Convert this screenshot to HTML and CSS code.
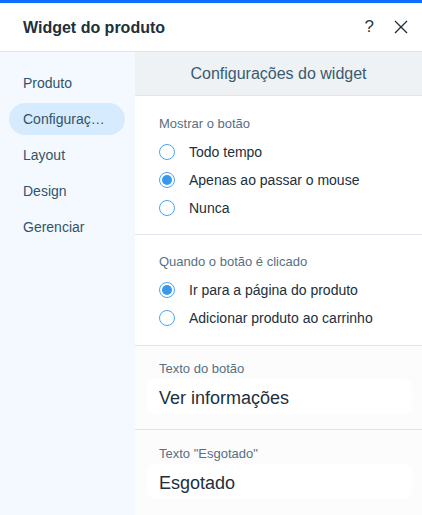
FILE: index.html
```html
<!DOCTYPE html>
<html lang="pt">
<head>
  <meta charset="UTF-8" />
  <meta name="viewport" content="width=device-width, initial-scale=1" />
  <title>Widget do produto</title>
  <link rel="stylesheet" href="styles.css">
</head>
<body>

  <div class="panel">
    <div class="topbar"></div>

    <div class="header">
      <h2>Widget do produto</h2>
      <div class="header-actions">
        <span class="help">?</span>
        <svg class="close" width="14" height="14" viewBox="0 0 14 14">
          <path d="M1 1 L13 13 M13 1 L1 13" stroke="#1d2b36" stroke-width="1.3" fill="none" />
        </svg>
      </div>
    </div>

    <div class="main">
      <nav class="sidebar">
        <div class="nav-item">Produto</div>
        <div class="nav-item active">Configuraç…</div>
        <div class="nav-item">Layout</div>
        <div class="nav-item">Design</div>
        <div class="nav-item">Gerenciar</div>
      </nav>

      <div class="content">
        <div class="content-title">Configurações do widget</div>

        <div class="section">
          <div class="section-label">Mostrar o botão</div>
          <label class="radio"><span class="dot"></span>Todo tempo</label>
          <label class="radio checked"><span class="dot"></span>Apenas ao passar o mouse</label>
          <label class="radio"><span class="dot"></span>Nunca</label>
        </div>

        <div class="section second">
          <div class="section-label">Quando o botão é clicado</div>
          <label class="radio checked"><span class="dot"></span>Ir para a página do produto</label>
          <label class="radio"><span class="dot"></span>Adicionar produto ao carrinho</label>
        </div>

        <div class="section text-field">
          <div class="section-label">Texto do botão</div>
          <div class="input">Ver informações</div>
        </div>

        <div class="section text-field last">
          <div class="section-label">Texto "Esgotado"</div>
          <div class="input">Esgotado</div>
        </div>
      </div>
    </div>
  </div>

</body>
</html>
```

FILE: styles.css
```css
body {
  margin: 0;
  background-color: #ffffff;
  font-family: "Liberation Sans", Arial, sans-serif;
  color: #20303c;
}

.panel {
  width: 422px;
  height: 515px;
  display: flex;
  flex-direction: column;
  overflow: hidden;
}

.topbar {
  height: 3px;
  background-color: #116dff;
}

.header {
  height: 48px;
  display: flex;
  align-items: center;
  justify-content: space-between;
  padding: 0 14px 0 23px;
  border-bottom: 1px solid #dfe5eb;
}

.header h2 {
  margin: 0;
  font-size: 16px;
  font-weight: bold;
  color: #20303c;
  padding-top: 2px;
}

.header-actions {
  display: flex;
  align-items: center;
  gap: 20px;
}

.help {
  font-size: 17px;
  color: #2b3b47;
}

.close {
  display: block;
}

.main {
  flex: 1;
  display: flex;
}

.sidebar {
  width: 135px;
  background-color: #f4f9ff;
  padding-top: 13px;
  box-sizing: border-box;
}

.nav-item {
  height: 36px;
  line-height: 36px;
  font-size: 14px;
  color: #32536a;
  padding-left: 23px;
}

.nav-item.active {
  height: 32px;
  line-height: 32px;
  margin: 2px 10px 2px 9px;
  padding-left: 14px;
  background-color: #d6ebfd;
  border-radius: 16px;
}

.content {
  flex: 1;
  display: flex;
  flex-direction: column;
}

.content-title {
  height: 43px;
  line-height: 43px;
  text-align: center;
  font-size: 16px;
  color: #3b5a70;
  background-color: #eef2f5;
  border-bottom: 1px solid #dfe5eb;
}

.section {
  padding: 19px 0 12px 24px;
  border-bottom: 1px solid #dfe5eb;
}

.section.second {
  padding-top: 18px;
  padding-bottom: 13px;
}

.section-label {
  font-size: 13px;
  line-height: 18px;
  color: #577083;
  margin-bottom: 5px;
}

.radio {
  display: flex;
  align-items: center;
  height: 28px;
  font-size: 14px;
  color: #20303c;
}

.radio .dot {
  width: 14px;
  height: 14px;
  border: 1px solid #4fa3f7;
  border-radius: 50%;
  margin-right: 14px;
  box-sizing: content-box;
  position: relative;
}

.radio.checked .dot::after {
  content: "";
  position: absolute;
  left: 2px;
  top: 2px;
  width: 10px;
  height: 10px;
  border-radius: 50%;
  background-color: #3899ec;
}

.text-field {
  background-color: #fcfcfc;
  padding: 14px 10px 15px 12px;
}

.text-field .section-label {
  padding-left: 12px;
  margin-bottom: 1px;
}

.text-field.last {
  padding-top: 15px;
  border-bottom: none;
  flex: 1;
}

.input {
  height: 35px;
  line-height: 38px;
  background-color: #ffffff;
  border-radius: 8px;
  padding-left: 12px;
  font-size: 18px;
  color: #20303c;
  overflow: hidden;
}
```
